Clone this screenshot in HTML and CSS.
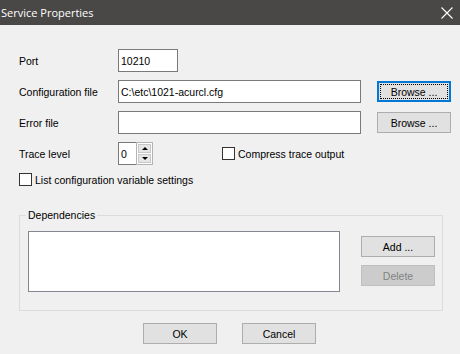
FILE: index.html
```html
<!DOCTYPE html>
<html lang="en">
<head>
    <meta charset="UTF-8">
    <meta name="viewport" content="width=device-width, initial-scale=1.0">
    <title>Service Properties</title>
    <link rel="stylesheet" href="styles.css">
</head>
<body>
    <div class="dialog">
        <div class="titlebar">
            <span class="title">Service Properties</span>
            <svg class="close" width="12" height="12" viewBox="0 0 12 12">
                <path d="M0.5 0.5 L11.5 11.5 M11.5 0.5 L0.5 11.5" stroke="#ffffff" stroke-width="1.1" fill="none"/>
            </svg>
        </div>

        <div class="content">
            <div class="row">
                <label class="label">Port</label>
                <input class="field port" type="text" value="10210">
            </div>

            <div class="row">
                <label class="label">Configuration file</label>
                <input class="field path" type="text" value="C:\etc\1021-acurcl.cfg">
                <button class="btn browse focused"><span class="focus-ring">Browse ...</span></button>
            </div>

            <div class="row">
                <label class="label">Error file</label>
                <input class="field path" type="text" value="">
                <button class="btn browse">Browse ...</button>
            </div>

            <div class="row">
                <label class="label">Trace level</label>
                <div class="spin">
                    <input class="field spin-input" type="text" value="0">
                    <div class="spin-buttons">
                        <span class="spin-btn"><span class="arrow up"></span></span>
                        <span class="spin-btn"><span class="arrow down"></span></span>
                    </div>
                </div>
                <label class="check compress"><span class="box"></span>Compress trace output</label>
            </div>

            <label class="check list-vars"><span class="box"></span>List configuration variable settings</label>

            <fieldset class="group">
                <legend>Dependencies</legend>
                <div class="group-body">
                    <div class="listbox"></div>
                    <div class="side-buttons">
                        <button class="btn">Add ...</button>
                        <button class="btn" disabled>Delete</button>
                    </div>
                </div>
            </fieldset>

            <div class="footer">
                <button class="btn">OK</button>
                <button class="btn">Cancel</button>
            </div>
        </div>
    </div>
</body>
</html>
```

FILE: styles.css
```css
body {
    margin: 0;
    background: #f0f0f0;
    font-family: 'Liberation Sans', Arial, sans-serif;
    font-size: 10.5px;
    color: #000000;
}

.dialog {
    width: 460px;
    height: 354px;
    background: #f0f0f0;
}

.titlebar {
    height: 25px;
    background: #4a4846;
    display: flex;
    align-items: center;
    justify-content: space-between;
    padding: 0 7px 0 1px;
    box-sizing: border-box;
}

.title {
    color: #ffffff;
    font-family: 'Open Sans', 'Noto Sans', sans-serif;
    font-size: 11px;
    margin-top: -1px;
}

.close {
    display: block;
}

.content {
    padding: 24px 0 0 19px;
}

.row {
    display: flex;
    align-items: center;
    height: 23px;
    margin-bottom: 8px;
}

.label {
    width: 99px;
    flex: none;
}

.field {
    height: 23px;
    box-sizing: border-box;
    border: 1px solid #7a7a7a;
    background: #ffffff;
    font-family: inherit;
    font-size: 10.5px;
    padding: 0 2px;
    margin: 0;
    outline: none;
}

.port {
    width: 60px;
}

.path {
    width: 243px;
}

.btn {
    width: 74px;
    height: 21px;
    box-sizing: border-box;
    border: 1px solid #adadad;
    background: #e1e1e1;
    font-family: inherit;
    font-size: 10.5px;
    color: #000000;
    padding: 0;
    margin: 0;
}

.btn:disabled {
    background: #cccccc;
    border-color: #bfbfbf;
    color: #838383;
}

.browse {
    margin-left: 16px;
}

.btn.focused {
    border: 2px solid #0078d7;
    padding: 1px;
}

.focus-ring {
    display: flex;
    align-items: center;
    justify-content: center;
    height: 100%;
    border: 1px dotted #000000;
    box-sizing: border-box;
}

.spin {
    display: flex;
    height: 23px;
}

.spin-input {
    width: 18px;
    border-right: none;
}

.spin-buttons {
    width: 17px;
    display: flex;
    flex-direction: column;
    border: 1px solid #b4b4b4;
    box-sizing: border-box;
    background: #ffffff;
    padding: 1px;
    gap: 1px;
}

.spin-btn {
    flex: 1;
    background: #e6e6e6;
    border: 1px solid #c8c8c8;
    display: flex;
    align-items: center;
    justify-content: center;
}

.arrow {
    width: 0;
    height: 0;
    border-left: 3px solid transparent;
    border-right: 3px solid transparent;
}

.arrow.up {
    border-bottom: 3px solid #000000;
}

.arrow.down {
    border-top: 3px solid #000000;
}

.check {
    display: flex;
    align-items: center;
}

.box {
    width: 13px;
    height: 13px;
    box-sizing: border-box;
    border: 1px solid #333333;
    background: #ffffff;
    margin-right: 3px;
}

.compress {
    margin-left: 69px;
}

.list-vars {
    margin-top: 6px;
    height: 13px;
}

.group {
    width: 424px;
    height: 102px;
    box-sizing: border-box;
    margin: 23px 0 0 0;
    padding: 0 0 0 8px;
    border: 1px solid #dcdcdc;
    border-radius: 0;
}

.group legend {
    padding: 0 2px;
    margin-left: -2px;
    line-height: 13px;
}

.group-body {
    display: flex;
    margin-top: 9px;
}

.listbox {
    width: 312px;
    height: 61px;
    box-sizing: border-box;
    border: 1px solid #828790;
    background: #ffffff;
}

.side-buttons {
    display: flex;
    flex-direction: column;
    gap: 8px;
    margin: 5px 0 0 21px;
}

.footer {
    display: flex;
    gap: 25px;
    margin: 12px 0 0 124px;
}
```
